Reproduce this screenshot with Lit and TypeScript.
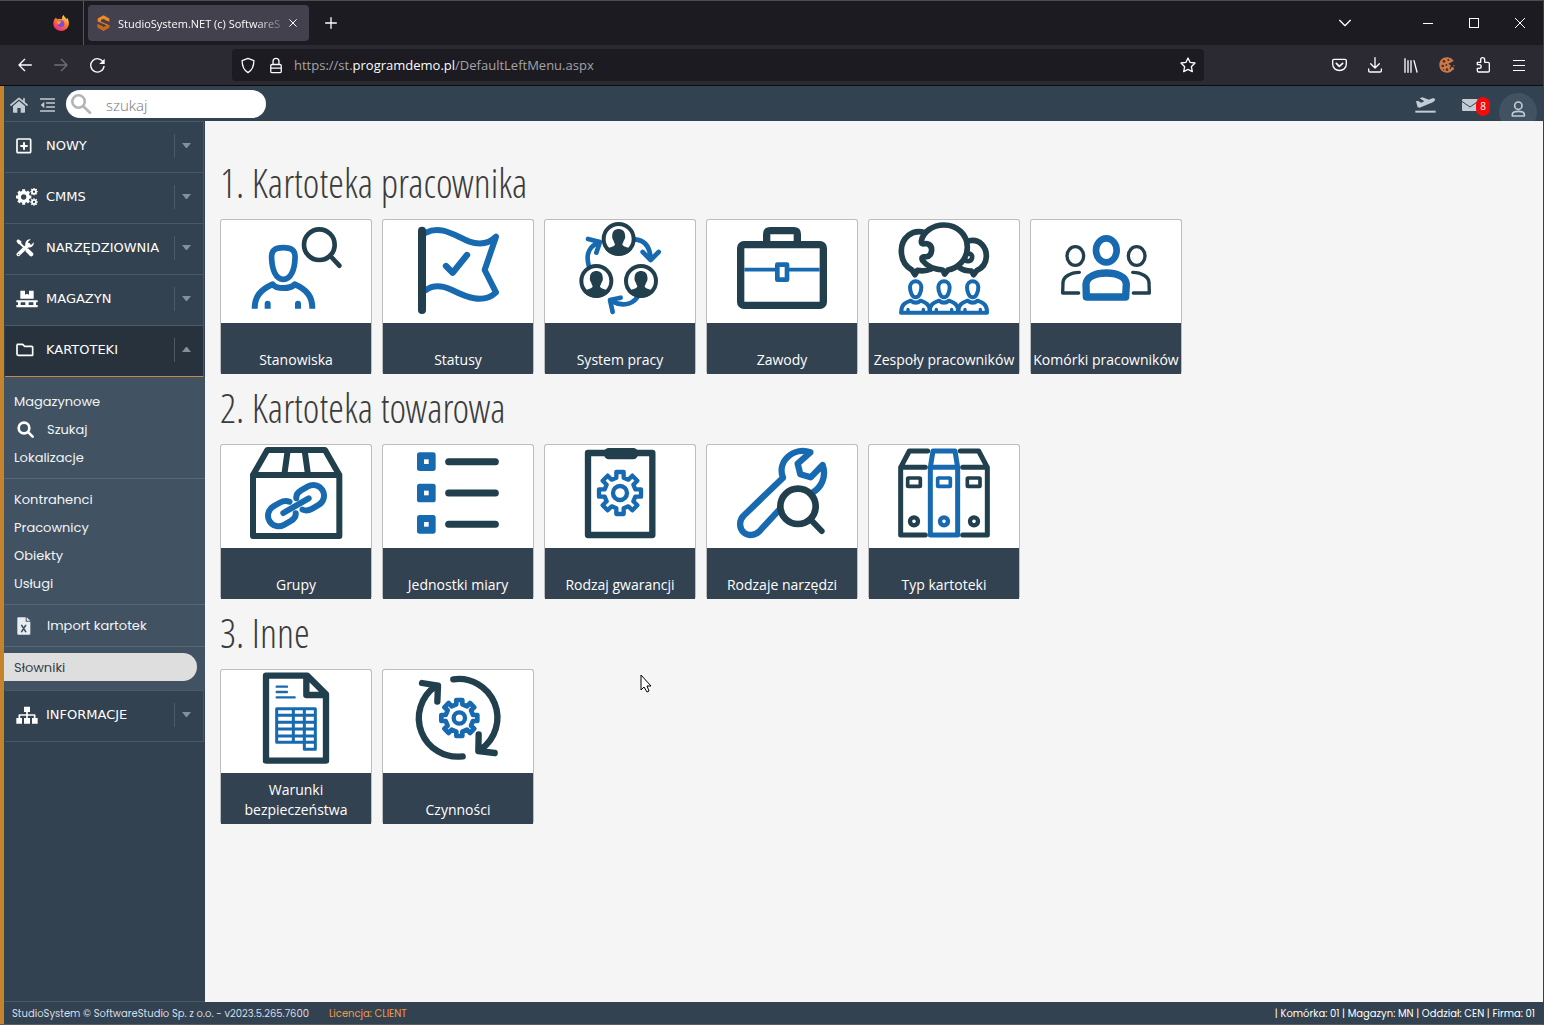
import { LitElement, html, css, svg, nothing, type TemplateResult, type SVGTemplateResult } from "lit";
import { customElement, property, state } from "lit/decorators.js";
import { classMap } from "lit/directives/class-map.js";

const NAVY = "#213f4c";
const BLUE = "#1769b0";

/** Outline of a toothed wheel with eight teeth. */
function gearPath(cx: number, cy: number, outer: number, root: number, half: number): string {
  const points: string[] = [];
  for (let i = 0; i < 8; i++) {
    const a = (i * Math.PI) / 4;
    const corners = [
      [root, -half],
      [outer, -half],
      [outer, half],
      [root, half],
    ];
    for (const [u, v] of corners) {
      const x = cx + u * Math.cos(a) - v * Math.sin(a);
      const y = cy + u * Math.sin(a) + v * Math.cos(a);
      points.push(`${Math.round(x)} ${Math.round(y)}`);
    }
  }
  return `M${points.join("L")}Z`;
}

const stroke = (d: string, color: string, width: number, cap = "round"): SVGTemplateResult =>
  svg`<path d=${d} fill="none" stroke=${color} stroke-width=${width} stroke-linecap=${cap} stroke-linejoin="round"></path>`;

const member = (x: number, y: number): SVGTemplateResult => svg`
  <g transform="translate(${x} ${y})">
    <circle r="45" fill="#fff" stroke=${NAVY} stroke-width="12"></circle>
    <path fill=${NAVY} d="M-19 -12C-19 -36 19 -36 19 -12C21 -6 18 2 16 4C14 10 12 13 11 17C15 24 32 26 41 30C24 56 -24 56 -41 30C-32 26 -15 24 -11 17C-12 13 -14 10 -16 4C-18 2 -21 -6 -19 -12Z"></path>
  </g>`;

const listener = (x: number): SVGTemplateResult => svg`
  <g transform="translate(${x} 0)">
    ${stroke("M-17 232C-17 208 17 208 17 232C17 246 10 262 0 262C-10 262 -17 246 -17 232Z", BLUE, 12)}
    ${stroke("M-43 304C-43 284 -32 278 -15 272Q0 284 15 272C32 278 42 284 43 304", BLUE, 12)}
    ${stroke("M-23 298V302M23 298V302", BLUE, 10)}
  </g>`;

interface Artwork {
  box: string;
  art: SVGTemplateResult;
}

const ARTWORK: Record<string, Artwork> = {
  position: {
    box: "33 210 450 309",
    art: svg`
      ${stroke("M185 326C183 302 194 293 220 293C246 293 257 302 255 326C254 358 243 388 220 388C197 388 186 358 185 326Z", BLUE, 17)}
      ${stroke("M134 476C134 440 150 420 188 403C200 418 240 418 254 403C292 420 307 440 307 476", BLUE, 18, "butt")}
      <path fill=${BLUE} d="M164 476V461a9 9 0 0 1 18 0V476ZM255 476V461a9 9 0 0 1 18 0V476Z"></path>
      <circle cx="328" cy="284" r="46" fill="none" stroke=${NAVY} stroke-width="14"></circle>
      ${stroke("M364 321L388 347", NAVY, 14)}`,
  },
  status: {
    box: "519 210 450 309",
    art: svg`
      ${stroke("M648 248C692 224 736 258 776 274C810 286 838 280 858 260L824 360L858 427C820 464 766 440 726 420C696 406 670 404 648 420", BLUE, 18)}
      ${stroke("M636 242V480", NAVY, 24)}
      ${stroke("M708 348L728 368L771 315", BLUE, 19)}`,
  },
  shifts: {
    box: "15 30 450 309",
    art: svg`
      ${stroke("M284 88C316 90 330 112 332 146M308 126L332 150L356 126", BLUE, 14)}
      ${stroke("M146 166C136 128 152 106 176 98M144 87L180 96L169 128", BLUE, 14)}
      ${stroke("M292 262C272 288 240 288 214 273M242 263L210 270L218 306", BLUE, 14)}
      ${member(236, 87)}${member(169, 213)}${member(303, 213)}`,
  },
  profession: {
    box: "501 30 450 309",
    art: svg`
      <rect x="602" y="104" width="248" height="182" rx="10" fill="none" stroke=${NAVY} stroke-width="22"></rect>
      ${stroke("M680 94V73Q680 62 691 62H761Q772 62 772 73V94", NAVY, 22, "butt")}
      ${stroke("M613 179H839", BLUE, 11, "butt")}
      <rect x="712" y="164" width="29" height="45" fill="#fff" stroke=${BLUE} stroke-width="14" stroke-linejoin="round"></rect>`,
  },
  teams: {
    box: "27 30 450 309",
    art: svg`
      ${stroke("M194 68C158 55 124 84 124 122C124 152 138 170 156 180L165 194L172 181C188 184 202 182 214 177", NAVY, 17)}
      ${stroke("M328 92C360 86 380 112 379 140C378 164 364 176 350 182L341 194L334 183C318 183 308 180 300 174", NAVY, 17)}
      ${stroke("M184 94C188 66 218 45 252 45C292 45 322 74 322 112C322 150 292 174 264 180L254 192L248 180C220 178 200 168 188 152C182 140 190 140 200 140C218 138 220 108 204 102C196 98 184 108 184 94Z", NAVY, 17)}
      ${stroke("M320 132C332 128 338 136 336 144C334 154 322 156 316 150", NAVY, 14)}
      ${listener(167)}${listener(252)}${listener(338)}
      ${stroke("M123 308H381", BLUE, 12)}`,
  },
  cells: {
    box: "513 30 450 309",
    art: svg`
      <ellipse cx="646" cy="138" rx="25" ry="28" fill="none" stroke=${NAVY} stroke-width="10"></ellipse>
      <ellipse cx="830" cy="138" rx="25" ry="28" fill="none" stroke=${NAVY} stroke-width="10"></ellipse>
      ${stroke("M658 187C630 187 609 202 609 218L608 249H656M818 187C846 187 867 202 867 218L868 249H820", NAVY, 10)}
      <ellipse cx="739" cy="121" rx="31" ry="36" fill="none" stroke=${BLUE} stroke-width="20"></ellipse>
      ${stroke("M679 261L678 222C680 200 708 189 739 189C770 189 798 200 799 222L797 261Z", BLUE, 22)}`,
  },
  groups: {
    box: "33 195 450 309",
    art: svg`
      ${stroke("M129 285L172 210H345L388 285V468H129V285H388", NAVY, 18)}
      ${stroke("M233 212L223 284M284 212L294 284", NAVY, 18, "butt")}
      <g transform="translate(258 377) rotate(-30)">
        ${stroke("M-11 -20C-18 -30 -28 -32 -38 -32H-60A32 32 0 0 0 -60 32H-36C-22 32 -16 28 -12 19", BLUE, 18)}
        ${stroke("M11 20C18 30 28 32 38 32H60A32 32 0 0 0 60 -32H36C22 -32 16 -28 12 -19", BLUE, 18)}
        ${stroke("M-44 0H44", BLUE, 18)}
      </g>`,
  },
  units: {
    box: "519 195 450 309",
    art: svg`
      ${[245, 339, 433].map(
        (y) => svg`
          <rect x="621" y=${y - 28} width="56" height="56" rx="8" fill=${BLUE}></rect>
          <rect x="642" y=${y - 7} width="14" height="14" fill="#fff"></rect>
          ${stroke(`M716 ${y}H856`, NAVY, 21)}`
      )}`,
  },
  warranty: {
    box: "15 30 450 309",
    art: svg`
      ${stroke("M144 54H337V300H144Z", NAVY, 19)}
      <rect x="193" y="39" width="100" height="34" rx="13" fill=${NAVY}></rect>
      ${stroke(gearPath(240, 174, 63, 46, 11), BLUE, 13)}
      <circle cx="240" cy="174" r="21" fill="none" stroke=${BLUE} stroke-width="13"></circle>`,
  },
  tools: {
    box: "501 30 450 309",
    art: svg`
      ${stroke("M716 226L658 289C644 303 624 303 611 292C598 280 596 258 610 243L729 128C710 80 760 34 811 52L773 86L781 118L812 127L848 90C860 126 844 158 816 174", BLUE, 19)}
      <circle cx="774" cy="214" r="53" fill="#fff" stroke=${NAVY} stroke-width="20"></circle>
      ${stroke("M812 254L845 288", NAVY, 18)}`,
  },
  files: {
    box: "27 30 450 309",
    art: svg`
      ${stroke("M203 48H148L122 97V300H196M122 97H196M301 48H356L382 97V300H308M382 97H308", NAVY, 15)}
      ${stroke("M219 48H285L293 97V300H211V97ZM211 97H293", BLUE, 15)}
      <rect x="143" y="129" width="38" height="25" rx="2" fill="none" stroke=${NAVY} stroke-width="11"></rect>
      <rect x="233" y="129" width="38" height="25" rx="2" fill="none" stroke=${BLUE} stroke-width="11"></rect>
      <rect x="322" y="129" width="38" height="25" rx="2" fill="none" stroke=${NAVY} stroke-width="11"></rect>
      <circle cx="162" cy="259" r="12" fill="none" stroke=${NAVY} stroke-width="13"></circle>
      <circle cx="252" cy="259" r="12" fill="none" stroke=${BLUE} stroke-width="13"></circle>
      <circle cx="342" cy="259" r="12" fill="none" stroke=${NAVY} stroke-width="13"></circle>`,
  },
  safety: {
    box: "33 180 450 309",
    art: svg`
      ${stroke("M168 197H292L348 253V452H168ZM289 200V255H346", NAVY, 19)}
      ${stroke("M200 230H231M200 246H231M200 262H254", BLUE, 7)}
      ${stroke("M200 296H316V418H283V296M200 296V397H316M200 316H316M200 337H316M200 357H316M200 378H316M250 296V397", BLUE, 9)}`,
  },
  actions: {
    box: "519 180 450 309",
    art: svg`
      ${stroke("M730 208A116 116 0 0 1 814 417M806 373L805 423L854 429", NAVY, 19)}
      ${stroke("M758 439A116 116 0 0 1 676 229M682 275L684 227L636 219", NAVY, 19)}
      ${stroke(gearPath(748, 324, 54, 41, 9), BLUE, 14)}
      <circle cx="748" cy="324" r="17" fill="none" stroke=${BLUE} stroke-width="13"></circle>`,
  },
};

type Glyph = [box: string, width: number, height: number, art: SVGTemplateResult];

const LIGHT = "#fbfbfe";
const PALE = "#c3ccd4";

const GLYPHS: Record<string, Glyph> = {
  firefox: ["0 0 48 48", 16, 16, svg`
    <defs>
      <linearGradient id="fire" x1="0.8" y1="0" x2="0.2" y2="1">
        <stop offset="0" stop-color="#ffe14d"></stop><stop offset="0.45" stop-color="#ff7a2e"></stop><stop offset="1" stop-color="#e8207a"></stop>
      </linearGradient>
    </defs>
    <path fill="url(#fire)" d="M8 8L14 13C18 10 24 11 27 13C26 7 29 2 32 0C33 5 38 8 40 12L43 9C50 20 49 34 40 42C30 51 14 49 6 40C-2 31 0 16 8 8Z"></path>
    <circle cx="24" cy="26" r="10" fill="#7a4bdc"></circle>
    <path fill="#ff9a30" d="M12 20C17 16 22 18 26 20C22 24 20 24 19 28C14 28 11 25 12 20Z"></path>`],
  brand: ["0 0 40 48", 13, 16, svg`
    <path fill="#f08a24" d="M20 0L38 10V20L28 16L20 11L12 15V20L38 31V38L20 48L2 38V28L12 32L20 37L28 33V30L2 19V10Z"></path>
    <path fill="#c9641a" d="M2 28L12 32L20 37V48L2 38ZM28 30V33L20 37V48L38 38V31Z"></path>`],
  close: ["0 0 24 24", 8, 8, stroke("M2 2L22 22M22 2L2 22", LIGHT, 3)],
  plus: ["0 0 36 36", 12, 12, stroke("M18 2V34M2 18H34", LIGHT, 4)],
  chevron: ["0 0 36 24", 12, 8, stroke("M2 4L18 20L34 4", LIGHT, 4)],
  minimise: ["0 0 10 10", 10, 10, svg`<path fill="#fff" d="M0 5H10V6H0Z"></path>`],
  maximise: ["0 0 10 10", 10, 10, svg`<path fill="#fff" fill-rule="evenodd" d="M0 0H10V10H0ZM1 1V9H9V1Z"></path>`],
  quit: ["0 0 10 10", 10, 10, stroke("M0 0L10 10M10 0L0 10", "#fff", 1)],
  back: ["0 0 42 42", 14, 14, stroke("M40 21H3M20 4L3 21L20 38", LIGHT, 4)],
  forward: ["0 0 42 42", 14, 14, stroke("M2 21H39M22 4L39 21L22 38", "#6d6d75", 4)],
  reload: ["0 0 45 45", 15, 15, svg`${stroke("M40 13A20 20 0 1 0 42 25", LIGHT, 4)}<path fill=${LIGHT} d="M44 2V18H28Z"></path>`],
  shield: ["0 0 48 52", 16, 17, stroke("M24 4L42 11C42 30 38 40 24 48C10 40 6 30 6 11Z", LIGHT, 4)],
  lock: ["-3 0 48 52", 16, 17, stroke("M9 23H33Q37 23 37 27V44Q37 48 33 48H9Q5 48 5 44V27Q5 23 9 23ZM12 22V13A9 9 0 0 1 30 13V22M5 34H37", LIGHT, 4)],
  star: ["0 0 48 48", 16, 16, stroke("M24 3L30 16L45 18L34 29L37 44L24 37L11 44L14 29L3 18L18 16Z", LIGHT, 4)],
  pocket: ["0 0 45 42", 15, 14, svg`${stroke("M6 4H39Q43 4 43 8V18C43 44 2 44 2 18V8Q2 4 6 4Z", LIGHT, 4)}${stroke("M13 16L22 25L32 16", LIGHT, 5)}`],
  download: ["0 0 42 48", 14, 16, stroke("M21 2V32M8 20L21 33L34 20M2 36V42Q2 45 6 45H36Q40 45 40 42V36", LIGHT, 4)],
  library: ["0 0 42 45", 14, 15, stroke("M3 2V43M12 8V43M21 8V43M30 8L39 42", LIGHT, 4)],
  cookie: ["0 0 48 48", 16, 16, svg`
    <path fill="#c9794a" d="M26 1C11 0 1 10 1 24C1 38 12 48 25 47C33 47 36 44 40 40L31 34L36 26L28 20L44 12C40 5 34 2 26 1Z"></path>
    <circle cx="40" cy="35" r="5" fill="#c9794a"></circle><circle cx="45" cy="26" r="2" fill="#c9794a"></circle>
    <g fill="#5a2d18"><circle cx="15" cy="13" r="4"></circle><circle cx="28" cy="9" r="3"></circle><circle cx="11" cy="27" r="4"></circle><circle cx="22" cy="24" r="3"></circle><circle cx="24" cy="38" r="4"></circle><circle cx="14" cy="38" r="2"></circle></g>`],
  puzzle: ["0 0 45 48", 15, 16, stroke("M4 16H14V8A6 6 0 0 1 26 8V16H36Q40 16 40 20V42Q40 45 36 45H8Q4 45 4 41V34H10A5 5 0 0 0 10 23H4Z", LIGHT, 4)],
  burger: ["0 0 12 12", 12, 12, svg`<path fill=${LIGHT} d="M0 1H12V2H0ZM0 6H12V7H0ZM0 11H12V12H0Z"></path>`],
  home: ["0 0 54 48", 18, 16, svg`
    <path fill=${PALE} d="M9 27L27 12L45 27V45Q45 47 43 47H32V33H22V47H11Q9 47 9 45Z"></path>
    ${stroke("M3 24L27 4L51 24M42 5V14", PALE, 5)}`],
  outdent: ["0 0 45 42", 15, 14, svg`${stroke("M2 3H43M20 15H43M20 27H43M2 39H43", PALE, 5)}<path fill=${PALE} d="M13 11V31L2 21Z"></path>`],
  lens: ["0 -2 64 64", 21, 21, stroke("M42 24A19 19 0 1 1 4 24A19 19 0 1 1 42 24ZM38 39L58 58", "#b4b4b4", 8)],
  plane: ["0 0 63 48", 21, 16, svg`
    <path fill=${PALE} d="M3 13L9 11L18 17L28 13L14 4L22 1L42 8C50 4 58 2 60 6C62 11 54 16 46 19L14 32L8 31Z"></path>
    <path fill=${PALE} d="M1 41H62V47H1Z"></path>`],
  mail: ["0 0 48 36", 16, 12, svg`<rect width="48" height="36" rx="4" fill=${PALE}></rect>${stroke("M1 8L24 24L47 8", "#334250", 3)}`],
  person: ["0 0 45 48", 15, 16, svg`<circle cx="22" cy="14" r="11" fill="none" stroke=${PALE} stroke-width="5"></circle>${stroke("M4 45V40C4 32 10 31 22 31C34 31 40 32 40 40V45Z", PALE, 5)}`],
  add: ["0 0 48 48", 16, 16, svg`<rect x="3" y="3" width="41" height="41" rx="3" fill="none" stroke="#fff" stroke-width="5"></rect>${stroke("M24 13V35M13 24H35", "#fff", 6, "butt")}`],
  gears: ["0 0 66 54", 22, 18, svg`
    <circle cx="23" cy="27" r="13" fill="none" stroke="#fff" stroke-width="11"></circle>
    ${stroke("M23 4V50M0 27H46M7 11L39 43M39 11L7 43", "#fff", 9, "butt")}
    <circle cx="23" cy="27" r="8" fill="#334250"></circle>
    <circle cx="54" cy="11" r="6" fill="none" stroke="#fff" stroke-width="5"></circle>
    <circle cx="54" cy="42" r="6" fill="none" stroke="#fff" stroke-width="5"></circle>
    ${stroke("M54 0V4M54 18V22M43 11H47M61 11H65M46 3L49 6M62 3L59 6M46 19L49 16M62 19L59 16M54 31V35M54 49V53M43 42H47M61 42H65M46 34L49 37M62 34L59 37M46 50L49 47M62 50L59 47", "#fff", 4, "butt")}`],
  workshop: ["0 0 54 54", 18, 18, svg`
    ${stroke("M7 46L38 17", "#fff", 11)}
    <path fill="#fff" d="M44 1L36 9V17L45 18L53 10C55 20 46 27 36 25L28 18C27 8 34 0 44 1Z"></path>
    ${stroke("M8 9L24 25", "#fff", 6)}
    <path fill="#fff" d="M1 6L6 1L16 7V12L12 16L7 15ZM30 30L36 28L51 42C55 48 48 55 42 51L28 37Z"></path>
    <circle cx="8" cy="46" r="2" fill="#334250"></circle>`],
  pallet: ["0 0 66 54", 22, 18, svg`
    <path fill="#fff" d="M13 2H27V14L33 11L39 14V2H53V26H13ZM1 31H65V37H60V45H65V52H1V45H6V37H1ZM14 37V45H28V37ZM38 37V45H52V37Z" fill-rule="evenodd"></path>`],
  folder: ["0 0 54 42", 18, 14, stroke("M4 4H20L26 10H47Q50 10 50 13V37H7Q3 37 3 34V7Q3 4 7 4Z", "#fff", 5)],
  sitemap: ["0 0 66 54", 22, 18, svg`
    <path fill="#fff" d="M24 2H42V18H24ZM1 36H18V53H1ZM24 36H42V53H24ZM48 36H65V53H48Z"></path>
    ${stroke("M33 18V38M10 38V27H56V38", "#fff", 5)}`],
  find: ["0 0 54 54", 18, 18, stroke("M37 21A16 16 0 1 1 5 21A16 16 0 1 1 37 21ZM34 34L47 47", "#fff", 8)],
  sheet: ["0 0 42 54", 14, 18, svg`
    <path fill="#e8edf1" d="M4 1H26V14H40V50Q40 53 37 53H4Q1 53 1 50V4Q1 1 4 1ZM29 1L40 11H29Z"></path>
    ${stroke("M14 25L26 44M26 25L14 44", "#415262", 5)}`],
  down: ["0 0 9 5", 9, 5, svg`<path fill="#83909b" d="M0 0H9L5 5H4Z"></path>`],
  up: ["0 0 9 5", 9, 5, svg`<path fill="#83909b" d="M0 5H9L5 0H4Z"></path>`],
  pointer: ["0 0 12 19", 12, 19, svg`<path fill="#fff" stroke="#000" stroke-width="1" d="M1 1V16L4 13L7 18L9 17L7 12H11Z"></path>`],
};

function glyph(name: string): TemplateResult {
  const [box, width, height, art] = GLYPHS[name];
  return html`<svg viewBox=${box} width=${width} height=${height} aria-hidden="true">${art}</svg>`;
}

const base = css`
  * {
    box-sizing: border-box;
  }
  svg {
    display: block;
    flex: none;
  }
  button {
    margin: 0;
    padding: 0;
    border: 0;
    background: none;
    color: inherit;
    font: inherit;
    cursor: pointer;
  }
  a {
    color: inherit;
    text-decoration: none;
  }
`;

@customElement("browser-frame")
class BrowserFrame extends LitElement {
  static styles = [
    base,
    css`
      :host {
        display: block;
        color: #fbfbfe;
        font-family: "Segoe UI", "Open Sans", "Noto Sans", sans-serif;
        border-bottom: 1px solid #0c0c0d;
      }
      .tabs {
        display: flex;
        align-items: center;
        height: 44px;
        background: #1c1b22;
      }
      .pinned {
        display: flex;
        align-items: center;
        justify-content: flex-end;
        width: 84px;
        height: 44px;
        padding-right: 14px;
        border-right: 1px solid #57565d;
      }
      .tab {
        display: flex;
        align-items: center;
        width: 221px;
        height: 36px;
        margin-left: 4px;
        padding: 0 12px 0 9px;
        border-radius: 4px;
        background: #42414d;
      }
      .title {
        flex: 1;
        min-width: 0;
        margin-left: 8px;
        overflow: hidden;
        white-space: nowrap;
        font-size: 11px;
        mask-image: linear-gradient(to right, #000 80%, transparent);
      }
      .key {
        display: flex;
        align-items: center;
        justify-content: center;
        width: 36px;
        height: 36px;
      }
      .small {
        width: 8px;
        height: 16px;
      }
      .new {
        width: 43px;
      }
      .list {
        margin-left: auto;
        margin-right: 42px;
      }
      .window {
        width: 46px;
      }
      .bar {
        display: flex;
        align-items: center;
        height: 40px;
        padding: 0 6px 0 7px;
        background: #2b2a33;
      }
      .address {
        display: flex;
        align-items: center;
        flex: 1;
        min-width: 0;
        height: 32px;
        margin: 0 117px;
        padding: 0 12px 0 8px;
        gap: 12px;
        border-radius: 4px;
        background: #1c1b22;
      }
      .url {
        flex: 1;
        min-width: 0;
        margin-left: -2px;
        overflow: hidden;
        white-space: nowrap;
        color: #a3a3a8;
        font-size: 13px;
      }
      .host {
        color: #fbfbfe;
      }
    `,
  ];

  private key(name: string, label: string, extra = ""): TemplateResult {
    return html`<button class="key ${extra}" type="button" aria-label=${label}>${glyph(name)}</button>`;
  }

  render() {
    return html`
      <div class="tabs">
        <div class="pinned">${glyph("firefox")}</div>
        <div class="tab">
          ${glyph("brand")}
          <span class="title">StudioSystem.NET (c) SoftwareS</span>
          ${this.key("close", "Zamknij kartę", "small")}
        </div>
        ${this.key("plus", "Nowa karta", "new")}
        ${this.key("chevron", "Lista kart", "list")}
        ${this.key("minimise", "Minimalizuj", "window")}
        ${this.key("maximise", "Maksymalizuj", "window")}
        ${this.key("quit", "Zamknij", "window")}
      </div>
      <div class="bar">
        ${this.key("back", "Wstecz")}${this.key("forward", "Dalej")}${this.key("reload", "Odśwież")}
        <div class="address">
          ${glyph("shield")}${glyph("lock")}
          <div class="url" role="textbox" aria-label="Adres">https://st.<span class="host">programdemo.pl</span>/DefaultLeftMenu.aspx</div>
          ${this.key("star", "Dodaj zakładkę", "small")}
        </div>
        ${this.key("pocket", "Pocket")}${this.key("download", "Pobrane")}${this.key("library", "Biblioteka")}
        ${this.key("cookie", "Ciasteczka")}${this.key("puzzle", "Rozszerzenia")}${this.key("burger", "Menu")}
      </div>
    `;
  }
}

@customElement("app-header")
class AppHeader extends LitElement {
  static styles = [
    base,
    css`
      :host {
        display: flex;
        align-items: center;
        height: 35px;
        padding: 0 6px;
        background: #334250;
        overflow: hidden;
        font-family: "Segoe UI", "Open Sans", "Noto Sans", sans-serif;
      }
      .tool {
        display: flex;
        align-items: center;
        position: relative;
        padding-top: 2px;
      }
      .outdent {
        margin: 0 11px 0 12px;
      }
      .search {
        display: flex;
        align-items: center;
        width: 200px;
        height: 28px;
        padding: 0 5px;
        gap: 14px;
        border-radius: 14px;
        background: #fff;
      }
      .field {
        flex: 1;
        min-width: 0;
        padding: 2px 0 0;
        border: 0;
        outline: 0;
        background: none;
        color: #555;
        font: 15px "Segoe UI", "Open Sans", "Noto Sans", sans-serif;
      }
      .field::placeholder {
        color: #757575;
        opacity: 1;
        font-weight: 300;
      }
      .right {
        display: flex;
        align-items: center;
        margin-left: auto;
      }
      .plane {
        margin-right: 26px;
      }
      .mail {
        margin-right: 21px;
      }
      .badge {
        position: absolute;
        left: 14px;
        top: 0;
        width: 14px;
        height: 19px;
        border-radius: 7px;
        background: #f30b0b;
        color: #fff;
        font-size: 10px;
        line-height: 19px;
        text-align: center;
      }
      .user {
        display: flex;
        justify-content: center;
        width: 38px;
        height: 38px;
        margin-top: 17px;
        padding-top: 8px;
        border-radius: 50%;
        background: #415262;
      }
    `,
  ];

  render() {
    return html`
      <a class="tool" href="#start" aria-label="Start">${glyph("home")}</a>
      <button class="tool outdent" type="button" aria-label="Zwiń menu">${glyph("outdent")}</button>
      <label class="search">
        ${glyph("lens")}
        <input class="field" type="search" placeholder="szukaj" aria-label="szukaj" />
      </label>
      <div class="right">
        <button class="tool plane" type="button" aria-label="Urlopy">${glyph("plane")}</button>
        <button class="tool mail" type="button" aria-label="Wiadomości">${glyph("mail")}<span class="badge">8</span></button>
        <button class="user" type="button" aria-label="Konto">${glyph("person")}</button>
      </div>
    `;
  }
}

interface Entry {
  label: string;
  icon?: string;
  current?: boolean;
}

interface Section {
  label: string;
  icon: string;
  groups?: Entry[][];
}

const MENU: Section[] = [
  { label: "NOWY", icon: "add" },
  { label: "CMMS", icon: "gears" },
  { label: "NARZĘDZIOWNIA", icon: "workshop" },
  { label: "MAGAZYN", icon: "pallet" },
  {
    label: "KARTOTEKI",
    icon: "folder",
    groups: [
      [{ label: "Magazynowe" }, { label: "Szukaj", icon: "find" }, { label: "Lokalizacje" }],
      [{ label: "Kontrahenci" }, { label: "Pracownicy" }, { label: "Obiekty" }, { label: "Usługi" }],
      [{ label: "Import kartotek", icon: "sheet" }],
      [{ label: "Słowniki", current: true }],
    ],
  },
  { label: "INFORMACJE", icon: "sitemap" },
];

@customElement("side-menu")
class SideMenu extends LitElement {
  @state() private open = "KARTOTEKI";

  static styles = [
    base,
    css`
      :host {
        display: block;
        width: 201px;
        flex: none;
        background: #334250;
        border-bottom: 1px solid #485a68;
      }
      .section {
        display: flex;
        align-items: center;
        width: 199px;
        height: 51px;
        margin-left: 1px;
        padding: 0 0 3px 11px;
        gap: 7px;
        border-top: 1px solid #485a68;
        border-right: 1px solid #485a68;
        color: #fff;
        font-family: Verdana, "DejaVu Sans", sans-serif;
        font-size: 13px;
        text-align: left;
      }
      .section.last {
        height: 52px;
        border-bottom: 1px solid #485a68;
      }
      .section.open {
        height: 52px;
        background: #28323c;
        border-bottom: 1px solid #c08a48;
      }
      .icon {
        width: 23px;
        flex: none;
      }
      .name {
        flex: 1;
      }
      .arrow {
        display: flex;
        align-items: center;
        height: 24px;
        padding: 0 12px 0 7px;
        border-left: 1px solid #4a5a68;
      }
      .sub {
        padding: 10px 0 9px;
        background: #415262;
        color: #f2f5f7;
        font-family: Poppins, "Open Sans", sans-serif;
        font-size: 13px;
      }
      .group + .group {
        margin-top: 7px;
        padding-top: 6px;
        border-top: 1px solid #556675;
      }
      .entry {
        display: flex;
        align-items: center;
        height: 28px;
        padding: 2px 0 0 10px;
        gap: 7px;
      }
      .mark {
        width: 26px;
        padding-left: 3px;
      }
      .current {
        margin-right: 8px;
        border-radius: 0 14px 14px 0;
        background: #dedede;
        color: #333f4a;
      }
    `,
  ];

  private toggle(label: string) {
    this.open = this.open === label ? "" : label;
  }

  render() {
    return html`<nav aria-label="Menu">
      ${MENU.map((section, i) => {
        const open = this.open === section.label;
        return html`
          <button
            class=${classMap({ section: true, open, last: i === MENU.length - 1 })}
            type="button"
            aria-expanded=${open}
            @click=${() => this.toggle(section.label)}
          >
            <span class="icon">${glyph(section.icon)}</span>
            <span class="name">${section.label}</span>
            <span class="arrow">${glyph(open ? "up" : "down")}</span>
          </button>
          ${open && section.groups
            ? html`<div class="sub">
                ${section.groups.map(
                  (group) => html`<div class="group">
                    ${group.map(
                      (entry) => html`<a class=${classMap({ entry: true, current: !!entry.current })} href="#kartoteki">
                        ${entry.icon ? html`<span class="mark">${glyph(entry.icon)}</span>` : nothing}${entry.label}
                      </a>`
                    )}
                  </div>`
                )}
              </div>`
            : nothing}
        `;
      })}
    </nav>`;
  }
}

@customElement("tile-card")
class TileCard extends LitElement {
  @property() label = "";
  @property() art = "";

  static styles = [
    base,
    css`
      :host {
        display: block;
        width: 152px;
      }
      .tile {
        display: block;
        border: 1px solid #bdbdbd;
        border-bottom: 0;
        border-radius: 3px;
        background: #fff;
      }
      .tile svg {
        width: 100%;
      }
      .caption {
        display: flex;
        align-items: flex-end;
        justify-content: center;
        height: 51px;
        padding-bottom: 4px;
        background: #334250;
        color: #fff;
        font-family: "Segoe UI", "Open Sans", "Noto Sans", sans-serif;
        font-size: 14px;
        line-height: 20px;
        text-align: center;
      }
    `,
  ];

  render() {
    const picture = ARTWORK[this.art];
    return html`<a class="tile" href="#slownik">
      <svg viewBox=${picture.box} height="103" aria-hidden="true">${picture.art}</svg>
      <span class="caption">${this.label}</span>
    </a>`;
  }
}

const CATALOG: { title: string; tiles: [string, string][] }[] = [
  {
    title: "1. Kartoteka pracownika",
    tiles: [
      ["Stanowiska", "position"],
      ["Statusy", "status"],
      ["System pracy", "shifts"],
      ["Zawody", "profession"],
      ["Zespoły pracowników", "teams"],
      ["Komórki pracowników", "cells"],
    ],
  },
  {
    title: "2. Kartoteka towarowa",
    tiles: [
      ["Grupy", "groups"],
      ["Jednostki miary", "units"],
      ["Rodzaj gwarancji", "warranty"],
      ["Rodzaje narzędzi", "tools"],
      ["Typ kartoteki", "files"],
    ],
  },
  {
    title: "3. Inne",
    tiles: [
      ["Warunki bezpieczeństwa", "safety"],
      ["Czynności", "actions"],
    ],
  },
];

@customElement("app-root")
class AppRoot extends LitElement {
  static styles = [
    base,
    css`
      :host {
        display: flex;
        flex-direction: column;
        position: relative;
        box-sizing: border-box;
        min-height: 100vh;
        border-top: 1px solid #4b4d50;
        border-right: 1px solid #3b3e42;
        border-bottom: 1px solid #5b5f63;
        background: #334250;
      }
      .app {
        display: flex;
        flex-direction: column;
        flex: 1;
        border-left: 4px solid #c5832b;
      }
      .body {
        display: flex;
        flex: 1;
      }
      .content {
        flex: 1;
        min-width: 0;
        padding: 28px 15px;
        background: #f5f5f5;
      }
      .heading {
        margin: 0;
        padding-bottom: 2px;
        color: #3c3c3c;
        font-family: "Open Sans Condensed Light", "Open Sans Condensed", "Noto Sans Condensed", "Liberation Sans Narrow", sans-serif;
        font-size: 40px;
        font-weight: 300;
        line-height: 68px;
      }
      .tiles {
        display: flex;
        flex-wrap: wrap;
        gap: 10px;
      }
      .footer {
        display: flex;
        align-items: center;
        height: 22px;
        padding: 2px 8px 0;
        gap: 20px;
        color: #d3dde8;
        font-family: Poppins, "Open Sans", sans-serif;
        font-size: 10px;
      }
      .licence {
        color: #f09a4a;
      }
      .place {
        margin-left: auto;
        color: #fff;
      }
      .pointer {
        position: absolute;
        left: 640px;
        top: 673px;
        pointer-events: none;
      }
    `,
  ];

  render() {
    return html`
      <browser-frame></browser-frame>
      <div class="app">
        <app-header></app-header>
        <div class="body">
          <side-menu></side-menu>
          <main class="content">
            ${CATALOG.map(
              (part) => html`
                <section>
                  <h1 class="heading">${part.title}</h1>
                  <div class="tiles">
                    ${part.tiles.map(([label, art]) => html`<tile-card label=${label} art=${art}></tile-card>`)}
                  </div>
                </section>
              `
            )}
          </main>
        </div>
        <footer class="footer">
          <span>StudioSystem © SoftwareStudio Sp. z o.o. - v2023.5.265.7600</span>
          <span class="licence">Licencja: CLIENT</span>
          <span class="place">| Komórka: 01 | Magazyn: MN | Oddział: CEN | Firma: 01</span>
        </footer>
      </div>
      <div class="pointer">${glyph("pointer")}</div>
    `;
  }
}
